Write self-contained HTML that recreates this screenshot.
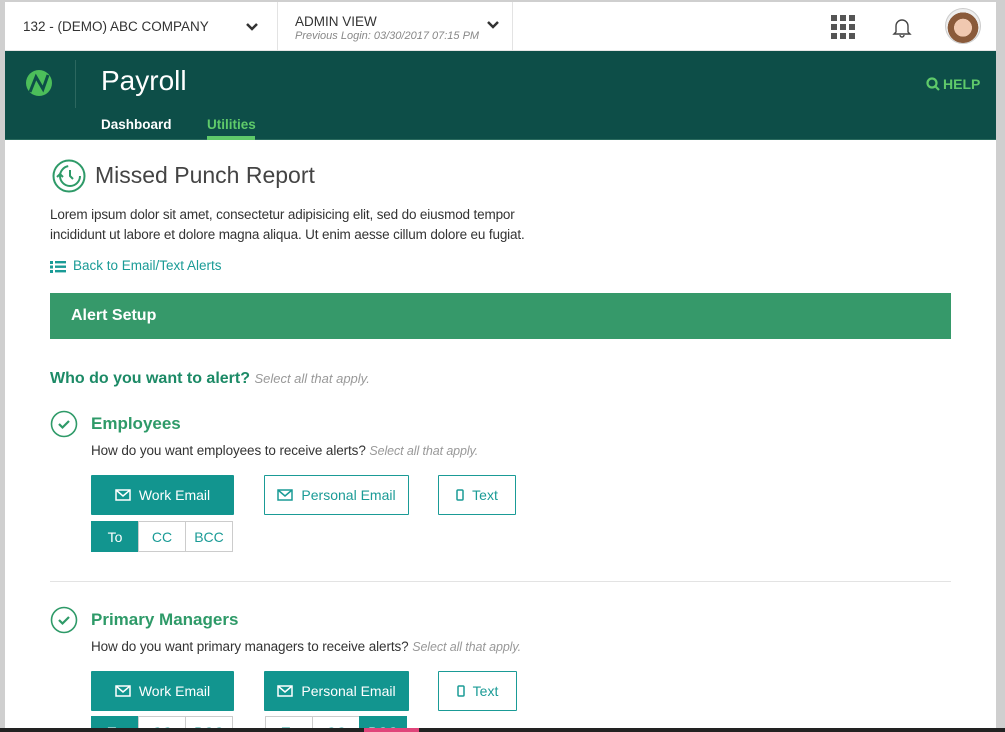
<!DOCTYPE html>
<html><head><meta charset="utf-8"><style>
*{margin:0;padding:0;box-sizing:border-box}
body{width:1005px;height:732px;overflow:hidden;background:#cfcfcf;font-family:"Liberation Sans",sans-serif;position:relative}
.a{position:absolute}
#page{position:absolute;left:5px;top:2px;width:991px;height:726px;background:#fff;overflow:hidden}
.btn{position:absolute;height:40px;border:1px solid #1a9b96;color:#1a9b96;font-size:14px;display:flex;align-items:center;justify-content:center;gap:8px;background:#fff;border-radius:1px}
.btn.on{background:#12958f;color:#fff;border-color:#12958f}
.btn svg{stroke:currentColor;fill:none;stroke-width:1.5}
.seg{position:absolute;display:flex;height:31px}
.seg div{width:48px;border:1px solid #ccc;display:flex;align-items:center;justify-content:center;font-size:14px;color:#1a9b96;margin-left:-1px}
.seg div.on{background:#12958f;color:#fff;border-color:#12958f}
.t{color:#333;font-size:13.5px;letter-spacing:-0.1px}
.it{color:#999;font-style:italic;font-size:12.5px}
</style></head><body>
<div id="page">
 <div class="a" style="left:0;top:0;width:991px;height:49px;background:#fff;border-bottom:1px solid #e5e5e5"></div>
 <div class="a" style="left:18px;top:17px;font-size:13.5px;color:#333">132 - (DEMO) ABC COMPANY</div>
 <svg class="a" style="left:240px;top:20px" width="14" height="10"><path d="M2 2l5 5 5-5" stroke="#333" stroke-width="2.5" fill="none"/></svg>
 <div class="a" style="left:272px;top:0;width:1px;height:49px;background:#e3e3e3"></div>
 <div class="a" style="left:290px;top:12px;font-size:13.5px;color:#333">ADMIN VIEW</div>
 <div class="a" style="left:290px;top:28px;font-size:11px;color:#888;font-style:italic">Previous Login: 03/30/2017 07:15 PM</div>
 <svg class="a" style="left:481px;top:18px" width="14" height="10"><path d="M2 2l5 5 5-5" stroke="#333" stroke-width="2.5" fill="none"/></svg>
 <div class="a" style="left:507px;top:0;width:1px;height:49px;background:#e3e3e3"></div>
 <svg class="a" style="left:826px;top:13px" width="24" height="24" fill="#555"><rect x="0" y="0" width="6" height="6"/><rect x="9" y="0" width="6" height="6"/><rect x="18" y="0" width="6" height="6"/><rect x="0" y="9" width="6" height="6"/><rect x="9" y="9" width="6" height="6"/><rect x="18" y="9" width="6" height="6"/><rect x="0" y="18" width="6" height="6"/><rect x="9" y="18" width="6" height="6"/><rect x="18" y="18" width="6" height="6"/></svg>
 <svg class="a" style="left:887px;top:14px" width="20" height="22" fill="none" stroke="#444" stroke-width="1.4"><path d="M4 16V10a6 6 0 0 1 12 0v6l2 2H2z"/><path d="M8 19a2 2 0 0 0 4 0"/></svg>
 <div class="a" style="left:940px;top:6px;width:36px;height:36px;border-radius:50%;border:1px solid #ccc;background:radial-gradient(circle at 50% 55%,#f0c8b0 0 35%,#8a5a3a 36% 60%,#eee 61%)"></div>
 <div class="a" style="left:0;top:49px;width:991px;height:89px;background:#0d4e48;border-bottom:1px solid #2a6a5e"></div>
 <svg class="a" style="left:19px;top:66px" width="30" height="30"><circle cx="15" cy="15" r="13" fill="#4cbe5a"/><path d="M6 24L12 9l7 12 5-14" stroke="#0d4e48" stroke-width="3" fill="none"/></svg>
 <div class="a" style="left:70px;top:58px;width:1px;height:48px;background:#2c675f"></div>
 <div class="a" style="left:96px;top:63px;font-size:28px;color:#fff">Payroll</div>
 <div class="a" style="left:96px;top:115px;font-size:13.5px;color:#fff;font-weight:bold">Dashboard</div>
 <div class="a" style="left:202px;top:115px;font-size:13.5px;color:#5fca6a;font-weight:bold">Utilities</div>
 <div class="a" style="left:202px;top:134px;width:48px;height:4px;background:#5fca6a"></div>
 <svg class="a" style="left:921px;top:75px" width="15" height="15" fill="none" stroke="#5fca6a" stroke-width="2.2"><circle cx="6" cy="6" r="4.5"/><path d="M9.5 9.5l3.5 3.5"/></svg>
 <div class="a" style="left:938px;top:74px;font-size:14px;color:#5fca6a;font-weight:bold">HELP</div>
 <svg class="a" style="left:47px;top:157px" width="34" height="34" fill="none" stroke="#2e9a68" stroke-width="2"><circle cx="17" cy="17" r="15.5"/><circle cx="18" cy="17" r="10" stroke-dasharray="45 20"/><path d="M18 11v6l3 3M5 18l3-3 3 3"/></svg>
 <div class="a" style="left:90px;top:160px;font-size:23px;color:#444">Missed Punch Report</div>
 <div class="a t" style="left:45px;top:203px;line-height:20px;letter-spacing:-0.15px">Lorem ipsum dolor sit amet, consectetur adipisicing elit, sed do eiusmod tempor<br>incididunt ut labore et dolore magna aliqua. Ut enim aesse cillum dolore eu fugiat.</div>
 <svg class="a" style="left:45px;top:258px" width="16" height="13" fill="#1a9b96"><rect x="0" y="1" width="3" height="3"/><rect x="5" y="1" width="11" height="2.4"/><rect x="0" y="5.5" width="3" height="3"/><rect x="5" y="5.5" width="11" height="2.4"/><rect x="0" y="10" width="3" height="3"/><rect x="5" y="10" width="11" height="2.4"/></svg>
 <div class="a" style="left:68px;top:256px;font-size:13.5px;color:#1a9b96">Back to Email/Text Alerts</div>
 <div class="a" style="left:45px;top:291px;width:901px;height:46px;background:#36996a"></div>
 <div class="a" style="left:66px;top:305px;font-size:16px;color:#fff;font-weight:bold">Alert Setup</div>
 <div class="a" style="left:45px;top:368px;font-size:16px;color:#1c8a66;font-weight:bold">Who do you want to alert? <span class="it" style="font-weight:normal;font-size:13px">Select all that apply.</span></div>
 <svg class="a" style="left:45px;top:408px" width="28" height="28" fill="none" stroke="#2e9a68" stroke-width="1.6"><circle cx="14" cy="14" r="12.5"/><path d="M9 14l3.5 3.5L19 11" stroke-width="2.2"/></svg>
 <div class="a" style="left:86px;top:412px;font-size:17px;color:#2e9a68;font-weight:bold">Employees</div>
 <div class="a t" style="left:86px;top:441px">How do you want employees to receive alerts? <span class="it">Select all that apply.</span></div>
 <div class="btn on" style="left:86px;top:473px;width:143px"><svg width="16" height="12"><rect x="1" y="1" width="14" height="10"/><path d="M1 1l7 6 7-6"/></svg>Work Email</div>
 <div class="btn" style="left:259px;top:473px;width:145px"><svg width="16" height="12"><rect x="1" y="1" width="14" height="10"/><path d="M1 1l7 6 7-6"/></svg>Personal Email</div>
 <div class="btn" style="left:433px;top:473px;width:78px"><svg width="8" height="12"><rect x="1" y="1" width="6" height="10" rx="1"/></svg>Text</div>
 <div class="seg" style="left:87px;top:519px"><div class="on">To</div><div>CC</div><div>BCC</div></div>
 <div class="a" style="left:45px;top:579px;width:901px;height:1px;background:#e3e3e3"></div>
 <svg class="a" style="left:45px;top:604px" width="28" height="28" fill="none" stroke="#2e9a68" stroke-width="1.6"><circle cx="14" cy="14" r="12.5"/><path d="M9 14l3.5 3.5L19 11" stroke-width="2.2"/></svg>
 <div class="a" style="left:86px;top:608px;font-size:17px;color:#2e9a68;font-weight:bold">Primary Managers</div>
 <div class="a t" style="left:86px;top:637px">How do you want primary managers to receive alerts? <span class="it">Select all that apply.</span></div>
 <div class="btn on" style="left:86px;top:669px;width:143px"><svg width="16" height="12"><rect x="1" y="1" width="14" height="10"/><path d="M1 1l7 6 7-6"/></svg>Work Email</div>
 <div class="btn on" style="left:259px;top:669px;width:145px"><svg width="16" height="12"><rect x="1" y="1" width="14" height="10"/><path d="M1 1l7 6 7-6"/></svg>Personal Email</div>
 <div class="btn" style="left:433px;top:669px;width:79px"><svg width="8" height="12"><rect x="1" y="1" width="6" height="10" rx="1"/></svg>Text</div>
 <div class="seg" style="left:87px;top:714px"><div class="on">To</div><div>CC</div><div>BCC</div></div>
 <div class="seg" style="left:261px;top:714px"><div>To</div><div>CC</div><div class="on">BCC</div></div>
</div>
<div class="a" style="left:0;top:728px;width:1005px;height:4px;background:#222"></div>
<div class="a" style="left:364px;top:728px;width:55px;height:4px;background:#e0457a"></div>
</body></html>
